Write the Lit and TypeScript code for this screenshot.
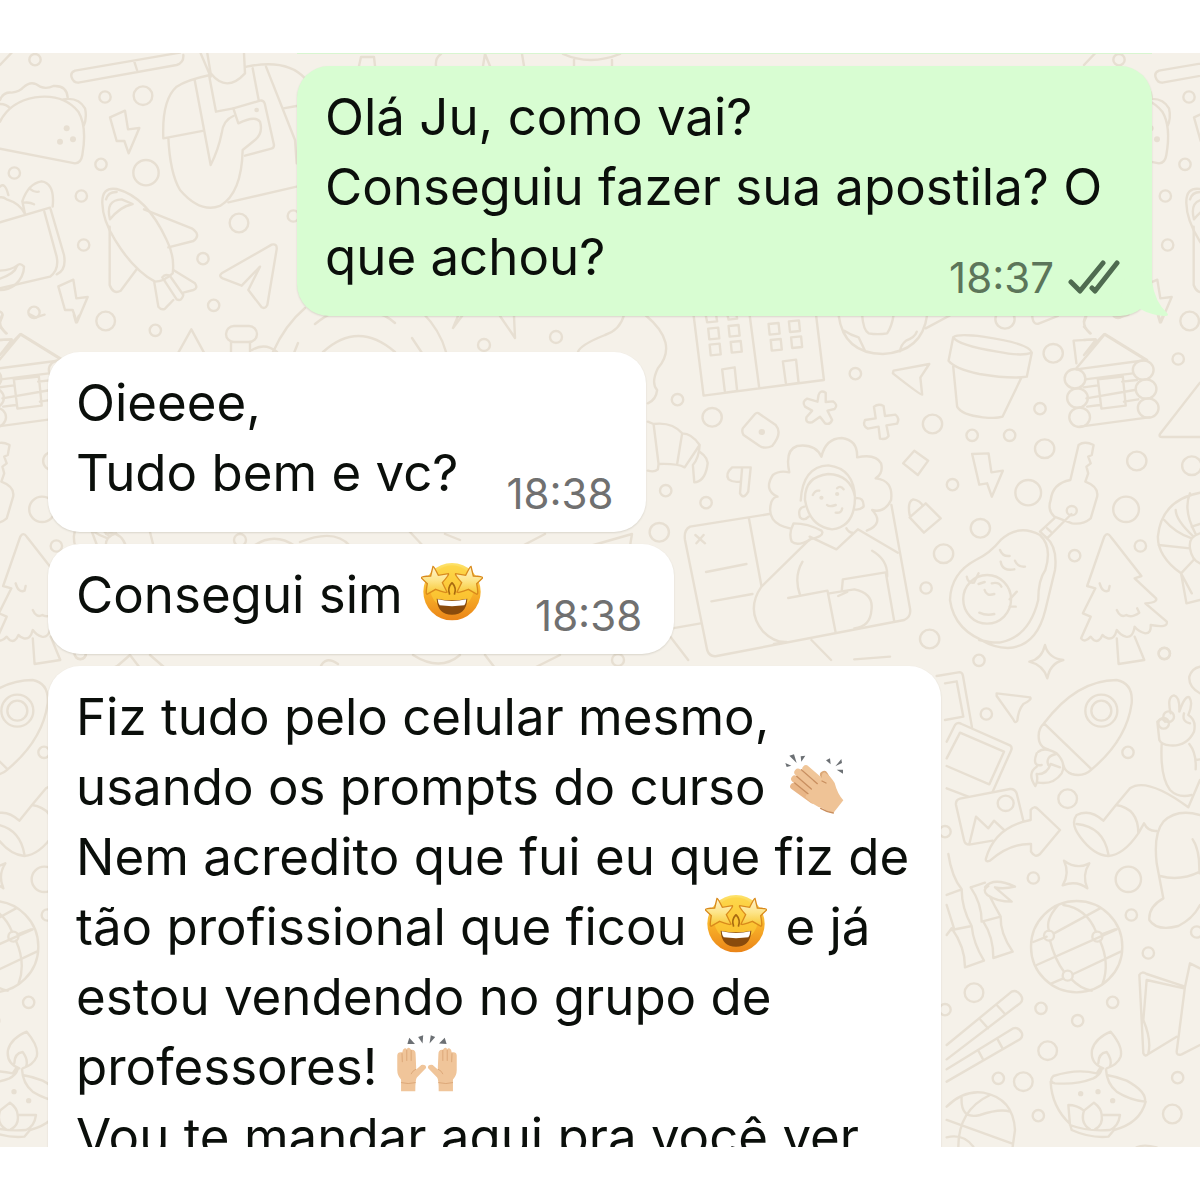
import { LitElement, html, svg, css, nothing } from "lit";
import { customElement, property } from "lit/decorators.js";

type Part = string | { emoji: "starstruck" | "clap" | "raised" };
interface Message {
  side: "in" | "out";
  lines: Part[][];
  time?: string;
}

const messages: Message[] = [
  {
    side: "out",
    lines: [["Olá Ju, como vai?"], ["Conseguiu fazer sua apostila? O"], ["que achou?"]],
    time: "18:37",
  },
  { side: "in", lines: [["Oieeee,"], ["Tudo bem e vc?"]], time: "18:38" },
  { side: "in", lines: [["Consegui sim ", { emoji: "starstruck" }]], time: "18:38" },
  {
    side: "in",
    lines: [
      ["Fiz tudo pelo celular mesmo,"],
      ["usando os prompts do curso ", { emoji: "clap" }],
      ["Nem acredito que fui eu que fiz de"],
      ["tão profissional que ficou ", { emoji: "starstruck" }, " e já"],
      ["estou vendendo no grupo de"],
      ["professores! ", { emoji: "raised" }],
      ["Vou te mandar aqui pra você ver"],
    ],
  },
];

/* ---------- emoji ---------- */

const star =
  "M62 49 Q65 49 78 76 L108 71 Q112 73 90 98 L104 126 Q103 131 70 118 L44 133 Q39 133 45 101 L27 84 Q26 79 55 78Z";

const emojiArt = {
  starstruck: html`<svg class="emoji" viewBox="26 36 186 180" role="img" aria-label="🤩">
    <defs>
      <linearGradient id="face" x1="0" y1="0" x2="0" y2="1">
        <stop offset="0" stop-color="#fde36a" /><stop offset=".5" stop-color="#f9b42a" />
        <stop offset="1" stop-color="#ea8418" />
      </linearGradient>
      <linearGradient id="star" x1="0" y1="0" x2="0" y2="1">
        <stop offset="0" stop-color="#fff3cf" /><stop offset=".5" stop-color="#fde58a" />
        <stop offset="1" stop-color="#f8c62e" />
      </linearGradient>
    </defs>
    <circle cx="119" cy="125" r="86" fill="url(#face)" />
    <circle cx="119" cy="112" r="66" fill="#fdd23a" opacity=".6" />
    <path d="M119 98 Q104 114 112 134 M119 98 Q134 114 126 134" fill="none" stroke="#a86a10" stroke-width="5" />
    <path d=${star} fill="url(#star)" stroke="#d98a1c" stroke-width="4" />
    <path d=${star} transform="translate(238 0) scale(-1 1)" fill="url(#star)" stroke="#d98a1c" stroke-width="4" />
    <path d="M73 146 Q119 156 165 146 Q162 194 119 194 Q76 194 73 146Z" fill="#8a4b0c" />
    <path d="M76 148 Q119 158 162 148 Q161 160 156 166 Q119 171 82 166 Q77 160 76 148Z" fill="#fff" />
  </svg>`,
  clap: html`<svg class="emoji" viewBox="34 36 186 186" role="img" aria-label="👏">
    <g fill="#6c7074">
      <path d="M38 66 L56 74 L42 78Z M50 44 L64 40 L72 66Z M84 46 L98 44 L86 62Z" />
      <path d="M160 58 L172 52 L174 70Z M206 54 L208 66 L188 76Z M192 86 L211 86 L211 98Z" />
    </g>
    <g stroke-linecap="round" fill="none">
      <path d="M154 102 L170 130" stroke="#dba877" stroke-width="24" />
      <path d="M100 84 L160 136" stroke="#f0c699" stroke-width="22" />
      <path d="M76 94 L140 150" stroke="#efc396" stroke-width="22" />
      <path d="M66 114 L128 166" stroke="#edbe90" stroke-width="21" />
      <path d="M62 136 L120 178" stroke="#e9b687" stroke-width="19" />
    </g>
    <path d="M128 108 L150 122 Q142 96 156 94 Q172 104 186 126 Q194 158 212 178 L182 216 Q172 218 150 202 Q124 196 98 168Z" fill="#efc396" />
    <path d="M86 86 L134 128 M72 106 L116 144 M66 126 L106 158 M148 120 L160 126 M144 202 Q164 214 182 216" fill="none" stroke="#c98f5f" stroke-width="4" stroke-linecap="round" />
  </svg>`,
  raised: html`<svg class="emoji" viewBox="32 26 196 186" role="img" aria-label="🙌">
    <g fill="#6c7074">
      <path d="M68 56 L74 36 L92 56Z M102 34 L118 28 L116 54Z M138 54 L142 28 L156 34Z M168 54 L186 36 L192 56Z" />
    </g>
    ${[0, 1].map(
      (i) => svg`<g transform=${i ? "translate(260 0) scale(-1 1)" : "translate(0 0)"}>
        <path d="M48 205 L48 168 Q36 156 36 138 L36 92 Q37 82 46 82 L52 82 L54 74 Q62 66 66 72 Q72 62 80 74 Q94 72 94 88 L96 136 L112 122 Q128 120 127 132 L98 162 Q93 168 93 205Z" fill="#f0c59a" />
        <path d="M51 86 L52 112 M66 76 L66 108 M80 76 L80 108 M94 136 Q84 140 80 150 M49 178 Q70 184 93 178" fill="none" stroke="#dba676" stroke-width="3" stroke-linecap="round" />
      </g>`,
    )}
  </svg>`,
};

/* ---------- wallpaper ---------- */

type Ring = [number, number];
const rings = (points: Ring[], rx: number, ry = rx) =>
  points.map(([x, y]) => svg`<ellipse cx=${x} cy=${y} rx=${rx} ry=${ry} />`);

const bolt = "M330 232 L375 212 L384 268 L418 264 L386 340 L373 303 L350 303Z";

const travel = () => svg`<g transform="translate(0 40) scale(.33333)">
  ${rings([[105, 59], [315, 171], [303, 373], [43, 399], [244, 468], [251, 615], [880, 528], [609, 656], [641, 796], [102, 817], [466, 871]], 17)}
  ${rings([[429, 167], [717, 549], [317, 843]], 28)}
  ${rings([[438, 398]], 38)}
  <path d="M225 92 L540 38 M235 128 L530 75 Q552 68 550 45 M225 92 Q210 98 215 112 Q220 128 235 128 M402 62 L411 90 M0 75 L35 38" />
  <path d="M0 326 L225 370 Q243 370 247 345 Q262 260 235 215 Q190 160 105 172 Q30 185 0 245 M0 180 Q10 155 35 158 Q60 155 70 142 Q95 118 120 140 Q140 148 160 138 Q200 135 203 172 M190 178 Q235 170 255 205 Q262 235 250 260 M0 192 Q20 192 30 205" />
  <g class="dots"><circle cx="200" cy="265" r="9" /><circle cx="180" cy="305" r="9" /><circle cx="219" cy="298" r="9" /><circle cx="770" cy="210" r="7" /></g>
  <path d=${bolt} /><path d=${bolt} transform="translate(-155 507)" />
  <path d="M75 522 L67 484 Q85 430 125 424 Q165 430 158 500 M92 448 q12 10 24 7 M72 488 q18 -2 30 5 M75 522 Q60 490 20 478 Q10 470 0 472 M0 440 Q15 425 25 465 M0 547 L150 503 M133 515 L170 650 Q178 690 150 710 L0 745 M152 508 L192 645 Q200 690 170 703" />
  <path d="M0 716 Q45 700 50 680 Q58 665 72 680 Q72 710 45 735 Q25 750 0 750 M0 692 Q35 690 52 676" />
  <path d="M307 490 Q305 440 350 447 Q440 470 500 600 Q525 650 518 700 Q490 725 465 725 Q400 690 345 600 Q308 540 307 490Z M330 538 Q315 480 365 478 L398 492 Q360 500 330 538Z M318 478 Q325 455 350 456" />
  <path d="M432 508 L575 565 Q605 585 580 603 L505 622 M329 560 L329 735 Q340 765 362 752 L410 688 M463 728 L475 800 Q485 812 495 806 L520 780 M520 690 L585 730 Q595 745 580 750 L550 758 M487 712 L530 778 Q545 785 550 765 L510 708 Q495 700 487 712" />
  <path d="M665 700 L815 614 Q832 610 830 628 L802 795 Q795 808 785 802 L745 750 L780 680 L725 737 L668 715 Q655 708 665 700Z" />
  <path d="M490 295 Q485 180 530 140 Q560 120 630 105 M490 295 L612 272 M584 120 L632 375 Q655 330 665 280 Q670 240 700 228 M505 293 Q510 400 540 450 Q600 520 660 498 Q725 460 728 330 L765 300 Q790 280 780 245 Q765 225 715 250 L700 205 L780 182 Q790 180 794 190 L822 315 Q822 324 814 326 L735 347" />
  <path d="M628 110 L648 215 L700 205 M758 85 L776 180 M798 80 L885 300 L890 370 M850 205 L890 198 M740 80 Q860 55 915 115 M685 487 L890 440 M602 40 L632 110 M622 40 L632 100 Q680 160 735 100 L732 40" />
  <path d="M535 938 L574 868 L612 938 M0 945 L60 883 L185 960 M0 900 L35 898 M0 945 L35 900 M0 860 L18 880 M0 815 Q15 820 0 845" />
</g>`;

const city = () => svg`<g transform="translate(640 310) scale(.35714 .33333)">
  ${rings([[603, 191], [105, 269], [930, 376], [1035, 376], [1120, 296], [1507, 147], [875, 524], [72, 542], [185, 578], [1217, 737], [1401, 708], [801, 834], [1468, 1030]], 16, 17)}
  ${rings([[1157, 130], [202, 322], [819, 342], [1133, 416], [1391, 453], [1545, 467], [54, 667], [953, 655], [850, 731], [811, 987], [1022, 28]], 27, 28)}
  ${rings([[1087, 548], [1361, 598]], 36, 38)}
  <path d="M150 15 L178 257 L515 210 L493 15 M307 15 L334 235 M230 178 L265 172 L272 243 L238 248Z M400 154 L437 149 L444 219 L409 224Z" />
  <path d="M184 15 l4 22 28 -3 -3 -20 M245 15 l3 14 24 -3 -2 -12 M191 56 l28 -3 3 32 -28 3Z M248 48 l28 -3 3 32 -28 3Z M195 104 l28 -3 3 32 -28 3Z M254 96 l28 -3 3 32 -28 3Z M360 42 l28 -3 3 32 -28 3Z M417 34 l28 -3 3 32 -28 3Z M366 90 l28 -3 3 32 -28 3Z M423 82 l28 -3 3 32 -28 3Z" />
  <path d="M556 15 Q570 130 680 132 Q790 125 804 15 M622 15 Q625 60 640 70 Q665 75 692 70 Q705 50 710 15 M572 62 Q590 75 612 82 L630 122 M728 124 Q730 105 745 92 Q770 82 775 65 M800 55 L870 15 M15 15 Q110 100 50 175 Q30 220 48 240 Q45 270 22 280" />
  <path d="M1098 15 Q1100 48 1118 40 L1170 18 M1250 15 Q1232 45 1262 70 M1325 12 l18 10 25 -8 M1450 15 l6 22 8 -20" />
  <path d="M877 82 Q890 70 960 80 Q1090 100 1097 128 Q1070 140 1000 125 Q890 105 877 82Z M877 82 L864 152 Q880 175 950 192 Q1040 208 1083 200 L1097 128 M877 170 L888 290 Q900 315 960 322 Q1000 326 1015 320 L1067 205" />
  <path d="M710 182 L810 162 L785 203 L790 254 Q785 255 708 190 Z" />
  <path d="M1222 175 L1302 72 L1420 150 L1222 178 M1222 160 L1214 92 L1275 88 M1246 208 L1380 190 M1250 265 L1385 240 M1242 232 L1282 226 M1350 215 L1392 210 M1252 290 L1288 285 M1355 275 L1395 268 M1232 350 L1425 322 M1282 208 L1352 200 L1360 287 L1292 296Z" />
  ${rings([[1218, 206], [1225, 264], [1231, 322], [1409, 180], [1417, 237], [1423, 294]], 29)}
  <path d="M1568 218 L1456 372 Q1452 381 1462 381 L1568 381" />
  <path d="M500 255 Q505 238 520 248 L520 276 L540 274 Q556 285 545 297 L525 302 L538 330 Q532 346 518 340 L504 320 L482 337 Q462 340 466 322 L482 302 L462 290 Q452 275 468 266 L497 275Z" />
  <path d="M655 290 Q668 280 682 288 L686 318 L715 314 Q728 325 720 341 L690 346 L696 378 Q690 390 672 386 L668 350 L638 356 Q622 348 630 330 L660 325Z" />
  <path d="M288 355 L322 312 Q328 305 335 312 L380 345 Q400 370 370 408 Q350 418 335 408 L290 375 Q284 365 288 355Z M737 460 L768 422 L807 452 L778 495Z M755 622 L800 580 L842 625 L795 668Z M755 615 Q748 575 765 568 Q785 572 792 588" />
  <circle class="dot" cx="341" cy="366" r="9" />
  <path d="M22 335 L38 342 Q90 335 118 370 Q145 370 167 405 L125 472 Q105 460 52 462 L50 478 Q40 488 22 482 M38 342 L52 462 M118 370 L104 462 M167 425 Q195 445 188 470 Q180 515 152 517 L148 465 Q165 445 167 405" />
  <path d="M310 472 L303 545 Q290 570 280 550 L286 472Z M286 472 L258 472 Q238 490 248 508 Q260 518 280 515" />
  <path d="M362 612 L140 650 Q122 660 126 690 L188 1020 Q195 1042 215 1038 L740 930 Q760 920 756 895 L704 585 M305 625 L340 828 M155 675 L182 700 M178 675 L158 700 M185 786 L298 762 M200 874 L315 852" />
  <path d="M420 655 Q350 640 368 575 Q375 560 385 560 Q345 540 372 495 Q390 480 418 487 Q405 420 440 408 Q490 400 508 440 Q520 385 565 384 Q610 390 608 442 Q660 430 675 460 Q682 490 660 505 Q710 510 703 570 Q685 610 650 600 Q685 640 635 662 M475 690 Q440 710 425 695 Q415 670 430 640 Q470 640 508 662" />
  <path d="M462 570 Q460 500 527 492 Q590 495 602 560 Q602 650 538 658 Q475 650 462 570Z M450 572 Q455 470 527 466 Q600 475 602 565 M460 590 Q440 595 448 622 Q460 634 472 620 M602 565 Q628 560 626 590 Q615 602 598 598 M484 555 Q490 540 502 542 M552 535 Q560 525 570 538 M524 585 Q530 592 548 585 M548 608 Q565 610 566 595" />
  <g class="dots"><circle cx="508" cy="563" r="6" /><circle cx="552" cy="552" r="6" /></g>
  <path d="M510 665 Q515 680 475 688 L340 830 Q295 900 345 965 Q375 998 410 996 L375 1002 M475 680 L550 718 L610 658 L722 728 M578 655 Q585 668 595 668 M455 755 Q430 800 448 855 M415 864 L525 842 L548 968 M565 842 L568 808 L688 787 L712 935 M650 722 Q695 750 692 800 M530 850 L600 838 Q655 850 648 900 Q645 950 600 955 M555 858 L580 846 M480 990 L535 1050 M85 980 L135 1050 M90 955 L170 940 M600 1048 L700 1040" />
  <path d="M930 432 L976 430 L984 487 L1016 482 L985 560 L972 520 L950 524Z M1205 510 L1228 405 Q1245 392 1270 405 L1265 435 L1255 440 L1262 460 L1250 470 L1255 490 L1247 515 Q1285 530 1280 560 L1262 625 Q1240 645 1210 640 L1160 620 Q1140 600 1150 570 Q1155 520 1205 510Z M1120 665 L1160 625 M1140 685 L1208 612 M1120 665 L1140 685 M1140 655 L1150 665" />
  <circle cx="1209" cy="602" r="14" />
  <path d="M980 1000 Q880 965 868 870 Q870 790 940 750 Q980 730 1010 690 Q1060 640 1120 675 Q1155 710 1135 780 Q1115 810 1115 870 Q1090 980 1010 997 Q990 1000 950 990 M1135 680 Q1170 710 1162 780 L1135 900 Q1110 1010 1030 1014 Q990 1012 960 993 M1008 720 Q1015 740 1035 738 M1050 752 Q1058 772 1078 770 M1010 755 Q1015 785 1048 778 M965 840 Q970 860 992 852 M948 822 L965 816 M985 820 Q1005 815 1012 830 M950 908 Q970 918 992 912 M1055 845 L1035 868 M1035 890 L1052 890" />
  <ellipse cx="972" cy="868" rx="67" ry="73" /><path d="M915 800 Q918 820 935 818 L948 790" />
  <path d="M1300 680 Q1308 665 1318 680 L1404 798 L1385 805 L1445 865 Q1450 878 1415 880 L1475 935 Q1480 955 1430 945 Q1432 970 1415 970 Q1395 965 1385 950 Q1380 985 1360 980 Q1345 975 1335 960 Q1328 990 1310 985 Q1298 980 1295 975 Q1285 1000 1270 990 Q1265 985 1262 980 Q1245 1000 1235 985 L1262 920 L1240 910 L1275 835 L1252 828Z M1287 820 Q1295 850 1312 842 L1315 828 M1335 900 Q1345 925 1362 915 Q1375 925 1398 908 L1392 895 M1335 985 L1340 1062 L1412 1050 L1385 980" />
  <path d="M1568 548 Q1460 570 1450 680 Q1450 740 1515 790 L1550 750 M1545 650 L1568 642 M1500 600 Q1500 630 1550 680 M1468 630 Q1500 670 1545 685 M1452 705 L1540 715 M1540 550 Q1520 600 1555 670 M1568 670 Q1535 680 1540 715 Q1545 750 1568 760 M1515 790 L1530 880 L1568 870 M1515 790 L1545 850" />
</g>`;

const play = () => svg`<g transform="translate(930 650) scale(.33333)">
  ${rings([[147, 31], [703, 11], [169, 192], [594, 307], [310, 684], [604, 795], [800, 846], [655, 909], [548, 1057], [333, 1075], [443, 1112], [205, 1285], [325, 1397], [743, 1283], [45, 545], [45, 1079]], 17)}
  ${rings([[413, 446], [132, 1028], [353, 1202], [280, 1295], [727, 1392]], 28)}
  ${rings([[595, 688]], 38)}
  <path d="M345 -15 Q355 25 400 30 Q360 40 352 85 Q340 45 298 35 Q335 28 345 -15Z" />
  <path d="M20 78 L85 67 Q97 65 99 78 L126 232 M45 100 L80 94 L100 200 L45 210 M200 130 L300 142 Q308 148 280 162 Q265 180 262 212 Q255 222 250 208 L200 138Z" />
  <path d="M50 275 L75 225 Q82 215 95 222 L240 286 Q248 292 243 302 L188 425 M50 325 L90 248 L222 305 L178 403 L50 348 M50 415 L115 440" />
  <path d="M188 572 L118 584 Q105 584 102 570 L78 465 Q76 450 90 446 L240 417 Q255 416 260 430 L280 512 M118 582 L138 500 L175 535 L192 512 L222 540" />
  <ellipse cx="227" cy="460" rx="24" ry="23" />
  <path d="M168 625 Q195 530 302 510 L302 480 Q312 465 325 478 L390 540 L330 612 Q315 625 303 605 L303 582 Q240 580 180 632 Q165 638 168 625Z" />
  <path d="M342 220 Q440 90 560 90 Q610 100 605 160 Q590 270 485 358 Q460 382 425 372 Q405 365 400 345 M342 220 Q320 240 328 275 Q335 295 355 298 M342 220 L485 358 M325 305 Q345 290 380 310 Q410 340 395 370 Q370 405 325 398 M320 310 Q305 350 335 345 M390 352 L362 342 Q350 375 320 372 Q325 395 316 408 Q290 370 320 350 M378 312 Q345 320 355 345" />
  ${rings([[514, 182]], 48)}${rings([[514, 182]], 30)}
  <path d="M558 465 L600 415 Q650 380 775 472 L810 390 M558 465 L520 512 Q480 475 440 495 Q420 520 450 560 Q490 615 535 618 Q580 615 625 550 L642 520 Q655 545 680 543 M558 465 Q625 475 625 550 M440 522 Q520 530 535 612" />
  <path d="M810 495 Q740 475 700 515 Q670 550 680 640 L700 745 Q655 770 658 810 Q680 845 745 828 Q790 805 810 765 M690 678 Q750 695 810 665 M788 568 Q810 600 808 670" />
  <path d="M722 190 Q710 140 732 136 Q750 140 748 185 Q765 135 778 142 Q790 160 775 195 Q800 210 792 245 Q770 290 720 286 Q695 285 688 270 L682 215 Q695 200 705 215 M762 190 Q755 215 780 220 M695 282 Q690 380 720 420 Q745 445 785 435 M778 282 Q800 310 797 358 M797 330 L810 328 M810 130 Q775 110 778 80 Q785 55 810 50" />
  ${rings([[716, 200]], 16)}${rings([[701, 220]], 16)}
  <path d="M402 632 Q440 660 478 640 Q455 675 472 715 Q440 690 398 706 Q420 670 402 632Z" />
  <path d="M55 612 Q65 680 95 718 Q95 775 125 828 Q130 880 162 932 L105 952 Q105 890 65 835 L50 855 M50 735 L95 718 M65 840 L125 828 M50 765 L72 835 M122 712 L165 698 M122 712 Q155 760 155 815 L212 800 Q210 850 248 905 L190 924 Q190 860 160 815 M180 740 Q195 770 212 800 M165 712 Q190 680 255 710 Q220 718 195 712 L245 755 Q200 755 172 735 Q155 720 175 708" />
  ${rings([[440, 890]], 137)}
  <path d="M310 876 L350 860 M372 850 L510 775 M320 945 L560 838 M365 1000 L400 985 M430 972 L572 905 M385 765 Q345 810 357 842 M360 872 Q375 930 402 965 M425 988 Q450 1015 485 1022 M400 765 Q470 775 498 845 M510 872 Q540 940 518 1000 M515 853 L555 838" />
  ${rings([[357, 857], [502, 860], [413, 977]], 15)}
  <path d="M50 1185 L245 1025 Q260 1018 272 1035 Q282 1050 270 1060 L50 1228 M152 1110 L174 1135 M203 1068 L225 1092 M50 1258 L250 1135 Q265 1130 275 1148 Q280 1160 270 1168 L50 1295 M145 1202 L160 1230 M203 1168 L218 1196" />
  <path d="M50 1370 Q100 1320 160 1328 Q250 1345 255 1440 L248 1490 M50 1410 L245 1480 M180 1335 Q85 1380 85 1490 M95 1340 Q90 1410 150 1395 Q210 1375 240 1385 M50 1462 Q100 1450 130 1490" />
  <path d="M520 1255 Q480 1240 486 1200 Q495 1165 542 1145 Q580 1190 572 1220 Q562 1245 530 1255 M505 1240 Q505 1210 530 1206 Q548 1230 540 1250 M510 1255 L500 1270 Q440 1255 370 1278 Q355 1295 375 1300 Q440 1305 490 1285 Q510 1275 515 1258 M528 1258 Q530 1300 560 1325 Q600 1350 645 1355 Q650 1325 590 1292 Q560 1280 530 1275 M362 1295 Q365 1370 420 1422 L425 1440 Q480 1465 535 1460 L552 1440 Q630 1420 647 1355 M420 1425 L415 1365 Q440 1365 462 1382 L492 1358 Q515 1375 515 1395 L570 1395 Q565 1430 540 1440 Q470 1445 420 1425 M462 1382 Q450 1420 480 1438 M515 1395 Q520 1425 495 1438" />
  <g class="dots"><circle cx="452" cy="1331" r="8" /><circle cx="504" cy="1325" r="8" /><circle cx="548" cy="1352" r="8" /></g>
  <path d="M628 975 Q635 962 650 972 L765 1010 L740 1205 Q740 1218 755 1213 L810 1185 M628 975 L640 1210 Q645 1222 655 1212 L740 1160 M650 990 L762 1015 M650 990 L640 1110 Q665 1170 655 1210 M765 1010 L780 940 L810 955 M620 1492 Q640 1482 680 1492" />
</g>`;

const strips = svg`
  <path d="M273 352 Q285 325 305 308 M422 312 Q440 330 446 352 M315 324 Q335 308 350 308 M372 312 Q385 314 395 323 M323 352 Q358 320 395 352 M298 343 l-4 10 M412 338 l10 15 M458 316 L453 328 L462 316 M500 316 L515 338 L514 316 M624 315 Q620 330 605 335 Q580 345 578 352" />
  <circle cx="484" cy="345" r="6" /><circle cx="556" cy="337" r="6" />
  <rect x="226" y="326" width="31" height="16" rx="8" /><path d="M231 342V352M250 342V352M252 350Q265 342 277 352" />
  <path d="M359 66 L361 57 H374 L375 66 M436 66 Q435 58 441 54 M483 66 L485 54 L490 66 M522 54 L524 66 M563 54 Q590 66 620 54 M574 60V66 M612 60V66" />
  <path d="M92 532 L98 548 M106 534 Q120 530 126 546 M150 532 L154 548 M255 545 Q275 532 295 546 M300 542 Q335 528 350 546 M410 532 L425 548 M445 534 l15 6 M522 546 L545 534 M590 546 L632 534 L630 546" />
  <path d="M115 668 L130 655 L140 668 M150 655 L165 668 M320 668 Q325 655 338 664 M413 655 Q440 672 460 655 M485 655 L495 668 M534 668 L560 655" /><circle cx="240" cy="540" r="6" /><circle cx="618" cy="660" r="6" />`;

@customElement("chat-wallpaper")
class ChatWallpaper extends LitElement {
  static styles = css`
    :host {
      display: block;
      overflow: hidden;
    }
    .art {
      display: block;
      width: 100%;
      height: 100%;
      fill: none;
      stroke: #e7dfd2;
      stroke-width: 2.4;
      stroke-linecap: round;
      stroke-linejoin: round;
    }
    .art * {
      vector-effect: non-scaling-stroke;
    }
    .dots circle,
    .dot {
      fill: #e7dfd2;
      stroke: none;
    }
  `;
  render() {
    return html`<svg class="art" viewBox="0 53 1200 1094" preserveAspectRatio="xMinYMin slice" aria-hidden="true">
      ${travel()}
      <g transform="translate(1084 0)">${travel()}</g>
      ${city()}
      <g transform="translate(-1084 0)">${city()}</g>
      ${play()}
      <g transform="translate(-1084 0)">${play()}</g>
      ${strips}
    </svg>`;
  }
}

@customElement("chat-bubble")
class ChatBubble extends LitElement {
  @property({ attribute: false }) message!: Message;

  static styles = css`
    :host {
      display: block;
      position: relative;
      width: fit-content;
    }
    :host([side="out"]) {
      width: calc(100% - 249px);
      margin: 0 0 24px auto;
    }
    .bubble {
      padding: 16px 32px 24px 28px;
      border-radius: 32px;
      background: #fff;
      box-shadow: 0 1px 2px rgba(60, 50, 30, 0.14);
    }
    .out {
      background: #d8fdd2;
    }
    .line {
      display: flex;
      align-items: flex-end;
      justify-content: space-between;
      gap: 48px;
      height: 70px;
      white-space: pre;
    }
    .text {
      font-size: 51px;
      line-height: 70px;
      color: #0b0f0b;
    }
    .emoji {
      width: 62px;
      height: 62px;
      margin: 0 4px;
      vertical-align: -10px;
    }
    .meta {
      display: flex;
      align-items: center;
      gap: 14px;
      font-size: 42px;
      line-height: 28px;
      color: #707070;
    }
    .out .meta {
      color: #5c755a;
    }
    .ticks {
      width: 52px;
      height: 36px;
      margin: -4px 0;
    }
    .tail {
      position: absolute;
      right: -17px;
      bottom: 0;
      width: 64px;
      height: 48px;
    }
  `;

  render() {
    const { side, lines, time } = this.message;
    return html`<div class="bubble ${side}">
      ${lines.map(
        (parts, i) => html`<div class="line"><span class="text">${parts.map((p) =>
          typeof p === "string" ? p : emojiArt[p.emoji],
        )}</span>${time && i === lines.length - 1
          ? html`<span class="meta"><time>${time}</time>${side === "out"
              ? html`<svg class="ticks" viewBox="0 0 52 36" fill="none" stroke="#4f6b50" stroke-width="5" stroke-linecap="round" stroke-linejoin="round" role="img" aria-label="Entregue">
                  <path d="M3 22 L12 31 L35 3 M24 28 L27 31 L49 3" />
                </svg>`
              : nothing}</span>`
          : nothing}</div>`,
      )}
    </div>
    ${side === "out"
      ? html`<svg class="tail" viewBox="0 0 64 48" aria-hidden="true">
          <path d="M47 0 V14 Q50 34 62 45 Q65 48 59 48 Q46 47 35 41 Q26 46 12 47 L20 10Z" fill="#d8fdd2" />
        </svg>`
      : nothing}`;
  }
}

@customElement("app-root")
class AppRoot extends LitElement {
  static styles = css`
    :host {
      display: flex;
      flex-direction: column;
      box-sizing: border-box;
      height: 100vh;
      padding: 53px 0;
      background: #fff;
      font-family: Inter, "Liberation Sans", sans-serif;
    }
    .chat {
      position: relative;
      flex: 1;
      min-height: 0;
      overflow: hidden;
      background: #f5f1e9;
    }
    .wallpaper {
      position: absolute;
      inset: 0;
    }
    .thread {
      position: relative;
      display: flex;
      flex-direction: column;
      gap: 12px;
      padding: 0 48px;
    }
    .earlier {
      height: 1px;
      margin: 0 0 0 249px;
      background: #d8f6d0;
    }
  `;
  render() {
    return html`<main class="chat">
      <chat-wallpaper class="wallpaper"></chat-wallpaper>
      <div class="thread">
        <div class="earlier"></div>
        ${messages.map((m) => html`<chat-bubble side=${m.side} .message=${m}></chat-bubble>`)}
      </div>
    </main>`;
  }
}
